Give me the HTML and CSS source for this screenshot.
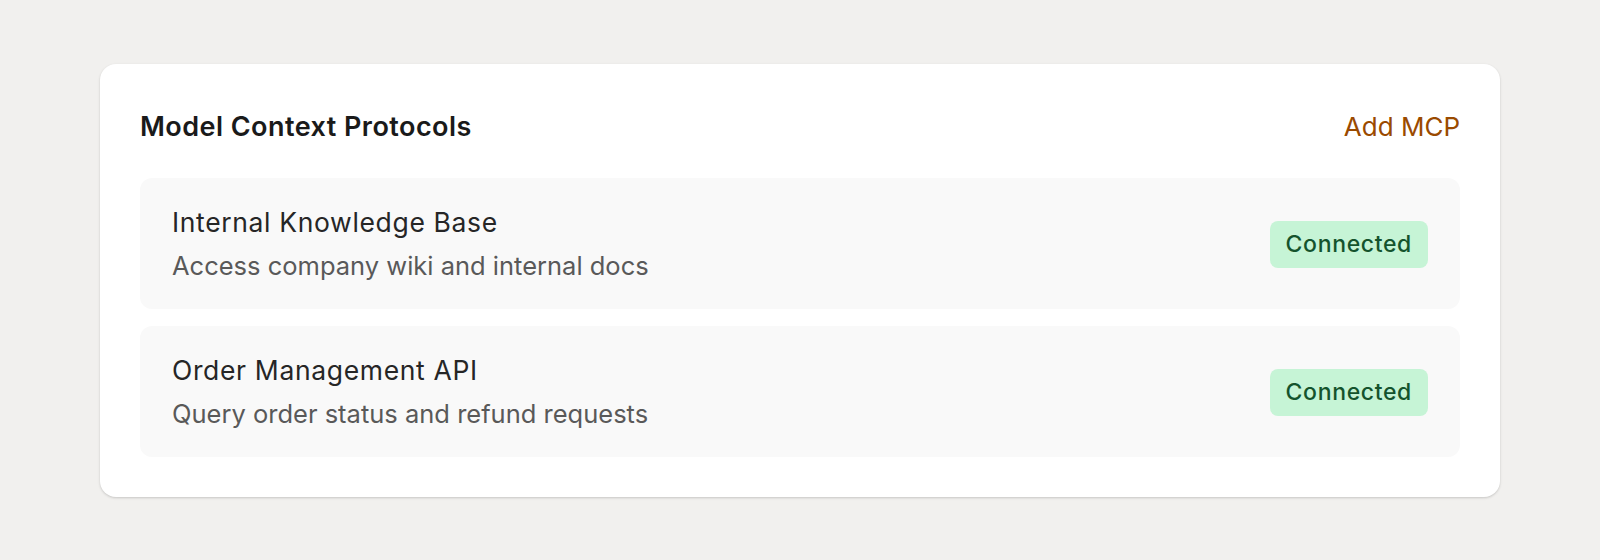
FILE: index.html
```html
<!DOCTYPE html>
<html lang="en">
<head>
<meta charset="utf-8">
<title>Model Context Protocols</title>
<link rel="stylesheet" href="styles.css">
</head>
<body>
<div class="page">
  <section class="card">
    <header class="card-header">
      <h2 class="card-title">Model Context Protocols</h2>
      <a class="add-link" href="#">Add MCP</a>
    </header>
    <div class="list">
      <div class="item">
        <div class="item-text">
          <div class="item-name">Internal Knowledge Base</div>
          <div class="item-desc">Access company wiki and internal docs</div>
        </div>
        <span class="badge">Connected</span>
      </div>
      <div class="item">
        <div class="item-text">
          <div class="item-name">Order Management API</div>
          <div class="item-desc">Query order status and refund requests</div>
        </div>
        <span class="badge">Connected</span>
      </div>
    </div>
  </section>
</div>
</body>
</html>
```

FILE: styles.css
```css
* { box-sizing: border-box; }

html, body {
  margin: 0;
  padding: 0;
  background: #f1f0ee;
  font-family: Inter, "Noto Sans", "Liberation Sans", sans-serif;
}

.page {
  padding: 64px 100px;
}

.card {
  width: 1400px;
  background: #ffffff;
  border-radius: 16px;
  padding: 40px;
  box-shadow: 0 1px 3px rgba(0, 0, 0, 0.12), 0 1px 2px rgba(0, 0, 0, 0.06);
}

.card-header {
  display: flex;
  justify-content: space-between;
  align-items: center;
  height: 46px;
  margin-bottom: 28px;
}

.card-title {
  margin: 0;
  font-size: 27px;
  font-weight: 600;
  line-height: 46px;
  letter-spacing: 0.45px;
  color: #1a1a1a;
}

.add-link {
  font-size: 26px;
  line-height: 46px;
  color: #9a4a00;
  text-decoration: none;
}

.list {
  display: flex;
  flex-direction: column;
  gap: 17px;
}

.item {
  display: flex;
  align-items: center;
  justify-content: space-between;
  background: #f9f9f9;
  border-radius: 12px;
  padding: 27px 32px 26px;
}

.item-text {
  display: flex;
  flex-direction: column;
  gap: 10px;
}

.item-name {
  font-size: 26.5px;
  line-height: 34px;
  letter-spacing: 0.65px;
  color: #262626;
}

.item-desc {
  font-size: 25.5px;
  line-height: 34px;
  color: #595959;
}

.badge {
  display: inline-flex;
  align-items: center;
  height: 47px;
  padding: 0 16px;
  border-radius: 8px;
  background: #c6f4d6;
  color: #14532d;
  font-size: 23px;
  font-weight: 500;
  letter-spacing: 0.65px;
}
```
